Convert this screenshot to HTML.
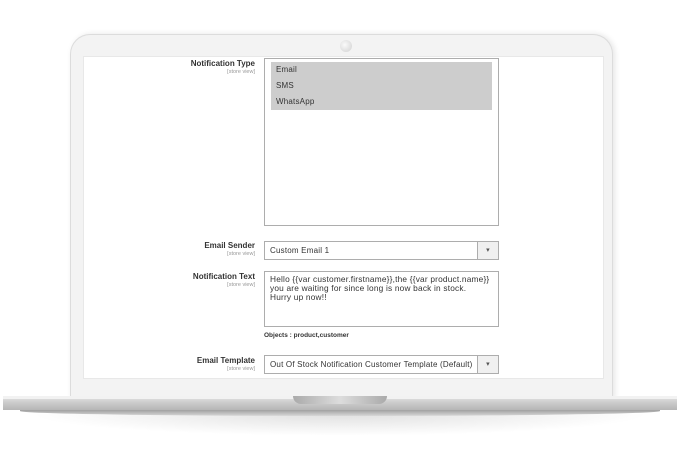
<!DOCTYPE html>
<html><head><style>
*{margin:0;padding:0;box-sizing:border-box}
body{width:680px;height:450px;background:#fff;position:relative;overflow:hidden;font-family:"Liberation Sans",sans-serif;color:#333}
.bezel{position:absolute;left:70px;top:34px;width:543px;height:365px;background:#f3f3f3;border-radius:20px 20px 0 0;border:1px solid #dcdcdc;border-bottom:none;box-shadow:2px 0 6px #e6e6e6}
.cam{position:absolute;left:340px;top:40px;width:12px;height:12px;border-radius:50%;background:radial-gradient(circle at 40% 40%,#fafafa,#d0d0d0)}
.screen{position:absolute;left:83px;top:56px;width:521px;height:323px;background:#fff;border:1px solid #e8e8e8}
.base{position:absolute;left:3px;top:396px;width:674px;height:14px;background:linear-gradient(#e8e8e8,#cfcfcf 40%,#b5b5b5);border-radius:2px 2px 0 0}
.base:before{content:"";position:absolute;left:0;right:0;top:0;height:3px;background:#f2f2f2}
.under{position:absolute;left:20px;top:410px;width:640px;height:6px;background:linear-gradient(#a0a0a0,#d8d8d8);border-radius:0 0 60% 60%/0 0 100% 100%}
.shadow{position:absolute;left:30px;top:414px;width:620px;height:22px;background:radial-gradient(ellipse at 50% 0,#e0e0e0,#fff 70%)}
.notch{position:absolute;left:293px;top:396px;width:94px;height:8px;background:linear-gradient(90deg,#aaa,#ddd 50%,#aaa);border-radius:0 0 8px 8px}
.lbl{position:absolute;right:425px;text-align:right;font-size:8px;font-weight:bold;color:#333;line-height:10px}
.lbl small{display:block;font-weight:normal;font-size:5.5px;color:#999;line-height:7px}
.box{position:absolute;left:264px;width:235px;border:1px solid #adadad;background:#fff;font-size:8px;letter-spacing:0.2px}
.sel{height:19px;line-height:17px;padding-left:5px}
.sel:after{content:"▾";position:absolute;right:0;top:0;width:20px;height:17px;border-left:1px solid #adadad;background:#f0f0f0;text-align:center;font-size:7px;color:#555}
.opt{background:#cdcdcd;height:16px;line-height:16px;padding-left:5px;font-size:8px}
</style></head><body>
<div class="shadow"></div>
<div class="bezel"></div>
<div class="cam"></div>
<div class="screen"></div>
<div class="base"></div>
<div class="under"></div>
<div class="notch"></div>

<div class="lbl" style="top:59px">Notification Type<small>[store view]</small></div>
<div class="box" style="top:58px;height:168px;padding:3px 6px 0 6px">
 <div class="opt">Email</div><div class="opt">SMS</div><div class="opt">WhatsApp</div>
</div>

<div class="lbl" style="top:241px">Email Sender<small>[store view]</small></div>
<div class="box sel" style="top:241px">Custom Email 1</div>

<div class="lbl" style="top:272px">Notification Text<small>[store view]</small></div>
<div class="box" style="top:271px;height:56px;padding:3px 5px;line-height:9px;font-size:8.3px">Hello {{var customer.firstname}},the {{var product.name}}<br>you are waiting for since long is now back in stock.<br>Hurry up now!!</div>
<div style="position:absolute;left:264px;top:332px;font-size:6.5px;font-weight:bold">Objects : product,customer</div>

<div class="lbl" style="top:356px">Email Template<small>[store view]</small></div>
<div class="box sel" style="top:355px">Out Of Stock Notification Customer Template (Default)</div>
</body></html>
